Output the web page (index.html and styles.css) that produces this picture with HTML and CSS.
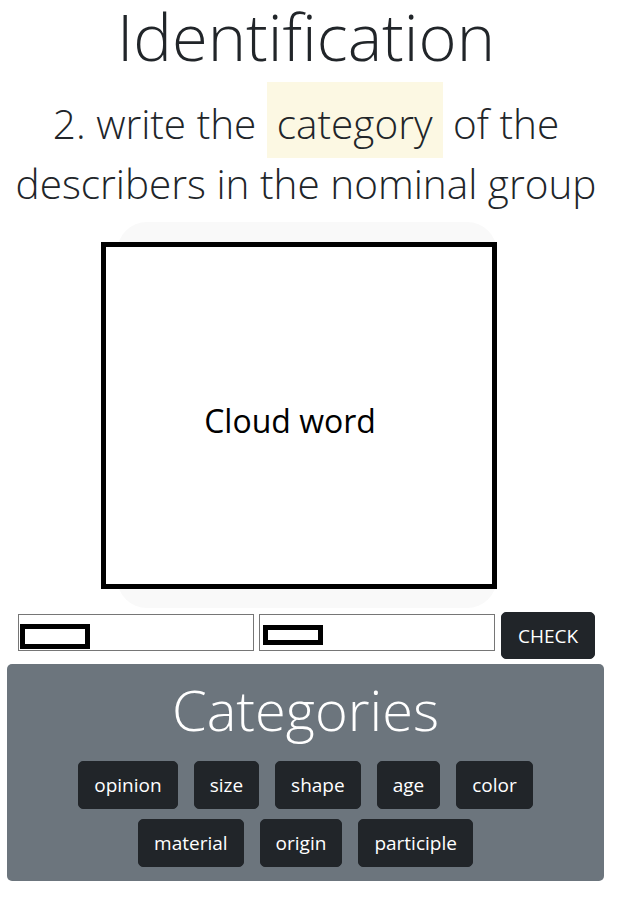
FILE: index.html
```html
<!DOCTYPE html>
<html lang="en">
<head>
<meta charset="utf-8">
<title>Identification</title>
<link rel="stylesheet" href="styles.css">
</head>
<body>
<h1 class="title">Identification</h1>
<h2 class="subtitle">2. write the <mark class="hl">category</mark> of the<br>describers in the nominal group</h2>
<div class="cloud-wrap">
  <div class="cloud">Cloud word</div>
</div>
<div class="answer-row">
  <div class="field"><span class="chip"></span></div>
  <div class="field"><span class="chip chip-small"></span></div>
  <button class="btn btn-check">CHECK</button>
</div>
<section class="panel">
  <h3 class="panel-title">Categories</h3>
  <div class="tags tags-first">
    <button class="btn">opinion</button>
    <button class="btn">size</button>
    <button class="btn">shape</button>
    <button class="btn">age</button>
    <button class="btn">color</button>
  </div>
  <div class="tags">
    <button class="btn">material</button>
    <button class="btn">origin</button>
    <button class="btn">participle</button>
  </div>
</section>
</body>
</html>
```
FILE: styles.css
```css
html, body {
  margin: 0;
  padding: 0;
  background: #ffffff;
}
body {
  font-family: "Open Sans", "Noto Sans", sans-serif;
  color: #212529;
  width: 612px;
}
.title {
  margin: -2px 0 20px;
  font-size: 65px;
  font-weight: 300;
  line-height: 76px;
  text-align: center;
}
.subtitle {
  margin: 0;
  font-size: 40.5px;
  font-weight: 300;
  line-height: 60px;
  text-align: center;
}
.hl {
  background: #fcf8e3;
  color: #212529;
  padding: 14px 10px 7px;
}
.cloud-wrap {
  width: 380px;
  height: 386px;
  margin: 8px 0 0 117px;
  background: #f9f9f9;
  border-radius: 30px;
  display: flex;
  align-items: flex-start;
}
.cloud {
  box-sizing: border-box;
  width: 396px;
  height: 347px;
  margin: 20px 0 0 -16px;
  border: 5px solid #000;
  background: #fff;
  display: flex;
  align-items: center;
  justify-content: center;
  padding: 10px 18px 0 0;
  font-size: 32px;
  color: #000;
}
.answer-row {
  display: flex;
  align-items: flex-start;
  gap: 5px;
  margin: 4px 0 0 18px;
}
.field {
  box-sizing: border-box;
  width: 236px;
  height: 37px;
  margin-top: 2px;
  border: 1px solid #767676;
  display: flex;
  align-items: center;
  padding-left: 1px;
}
.chip {
  box-sizing: border-box;
  display: block;
  width: 70px;
  height: 25px;
  border: 5px solid #000;
  margin-top: 8px;
}
.chip-small {
  width: 60px;
  height: 20px;
  margin-top: 4px;
  margin-left: 2px;
}
.btn {
  font-family: "Open Sans", "Noto Sans", sans-serif;
  background: #212529;
  color: #fff;
  border: 1px solid #212529;
  border-radius: 5px;
  font-size: 19px;
  line-height: 28px;
  padding: 9px 15px;
  cursor: pointer;
}
.btn-check {
  height: 47px;
  padding: 0 16px;
  margin-left: 1px;
}
.panel {
  margin: 5px 8px 0 7px;
  background: #6c757d;
  border-radius: 5px;
  padding: 7px 0 14px;
  text-align: center;
}
.panel-title {
  margin: 0;
  color: #fff;
  font-size: 56px;
  font-weight: 300;
  line-height: 76px;
}
.tags {
  display: flex;
  justify-content: center;
  gap: 16px;
  margin-top: 10px;
}
.tags-first {
  margin-top: 14px;
}
```
